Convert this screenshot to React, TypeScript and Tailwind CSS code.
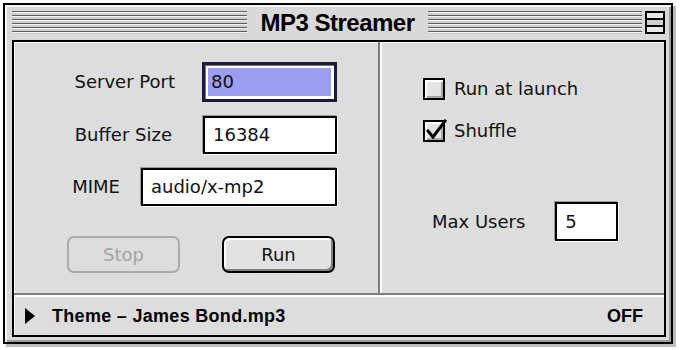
import { useState } from 'react'

const label = "font-['DejaVu_Sans',sans-serif] text-[18px] leading-none text-[#111]"
const stripes =
  'h-[23px] bg-[repeating-linear-gradient(to_bottom,#5e5e5e_0px,#5e5e5e_1px,#f4f4f4_1px,#f4f4f4_2px,#cfcfcf_2px,#cfcfcf_4px)]'

function Field({ value, width, focused = false }: { value: string; width: string; focused?: boolean }) {
  if (focused) {
    return (
      <div className={`${width} h-[40px] border-[3px] border-[#1c1c3a] bg-white p-[3px] shadow-[inset_1px_1px_0_#777]`}>
        <div className="flex h-full items-center bg-[#9d9df2] pl-[3px]">
          <span className={label}>{value}</span>
        </div>
      </div>
    )
  }
  return (
    <div
      className={`${width} flex items-center border-2 border-black bg-white pl-[8px] shadow-[1px_1px_0_#ffffff,-1px_-1px_0_#9a9a9a]`}
    >
      <span className={label}>{value}</span>
    </div>
  )
}

function Checkbox({ text, checked }: { text: string; checked: boolean }) {
  return (
    <div className="flex items-center gap-[9px]">
      <div className="relative h-[22px] w-[22px] border-2 border-black bg-[#e4e4e4] shadow-[inset_2px_2px_0_#ffffff,inset_-2px_-2px_0_#a8a8a8]">
        {checked && (
          <svg className="absolute -left-[2px] -top-[4px]" width="26" height="26" viewBox="0 0 26 26">
            <path d="M5 13 L10 19 L22 3" fill="none" stroke="#000" strokeWidth="3" strokeLinecap="square" />
          </svg>
        )}
      </div>
      <span className={label}>{text}</span>
    </div>
  )
}

export default function App() {
  const [shuffle] = useState(true)

  return (
    <div className="h-[350px] w-[680px] bg-white pl-[3px] pt-[3px]">
      <div className="flex h-[341px] w-[670px] flex-col border-2 border-black bg-[#d9d9d9] shadow-[inset_2px_2px_0_#f6f6f6,inset_-2px_-2px_0_#9c9c9c,3px_3px_0_#bdbdbd]">
        {/* title bar */}
        <div className="flex h-[35px] shrink-0 items-center pl-[7px] pr-[4px]">
          <div className={`w-[235px] ${stripes}`} />
          <div className="flex w-[181px] justify-center">
            <span className="font-['Liberation_Sans',sans-serif] text-[24px] font-bold leading-none tracking-[-0.5px] text-black">
              MP3 Streamer
            </span>
          </div>
          <div className={`flex-1 ${stripes}`} />
          <div className="ml-[3px] mr-[2px] flex h-[23px] w-[20px] flex-col border-2 border-black bg-[#d0d0d0]">
            <div className="flex-1 bg-[#e8e8e8]" />
            <div className="h-[2px] bg-black" />
            <div className="flex-1 bg-[#cfcfcf]" />
            <div className="h-[2px] bg-black" />
            <div className="flex-1 bg-[#e8e8e8]" />
          </div>
        </div>

        {/* content frame */}
        <div className="mb-[5px] ml-[7px] flex h-[297px] w-[654px] flex-col border-2 border-black bg-[#dddddd] shadow-[inset_1px_1px_0_#ffffff]">
          <div className="flex h-[251px]">
            {/* left pane */}
            <div className="flex w-[364px] flex-col pr-[41px] pt-[20px]">
              <div className="flex items-center justify-end gap-[27px]">
                <span className={label}>Server Port</span>
                <Field value="80" width="w-[135px]" focused />
              </div>
              <div className="mt-[14px] flex items-center justify-end gap-[31px]">
                <span className={label}>Buffer Size</span>
                <Field value="16384" width="w-[134px] h-[38px]" />
              </div>
              <div className="mt-[14px] flex items-center justify-end gap-[21px]">
                <span className={label}>MIME</span>
                <Field value="audio/x-mp2" width="w-[196px] h-[38px]" />
              </div>
              <div className="mt-[30px] flex gap-[42px] pl-[53px]">
                <button
                  type="button"
                  disabled
                  className={`flex h-[37px] w-[113px] items-center justify-center rounded-[7px] border-2 border-[#aaaaaa] bg-[#dddddd] ${label} text-[#a4a4a4]`}
                >
                  Stop
                </button>
                <button
                  type="button"
                  className={`flex h-[37px] w-[113px] items-center justify-center rounded-[7px] border-2 border-black bg-[#e2e2e2] shadow-[inset_2px_2px_0_#ffffff,inset_-2px_-2px_0_#808080] ${label}`}
                >
                  Run
                </button>
              </div>
            </div>

            {/* groove */}
            <div className="flex w-[4px]">
              <div className="w-[2px] bg-[#7c7c7c]" />
              <div className="w-[2px] bg-white" />
            </div>

            {/* right pane */}
            <div className="flex flex-1 flex-col pl-[41px] pt-[36px]">
              <Checkbox text="Run at launch" checked={false} />
              <div className="mt-[20px]">
                <Checkbox text="Shuffle" checked={shuffle} />
              </div>
              <div className="mt-[60px] flex items-center gap-[30px] pl-[9px]">
                <span className={label}>Max Users</span>
                <Field value="5" width="w-[63px] h-[39px]" />
              </div>
            </div>
          </div>

          {/* groove */}
          <div className="flex h-[4px] flex-col">
            <div className="h-[2px] bg-[#7c7c7c]" />
            <div className="h-[2px] bg-white" />
          </div>

          {/* status bar */}
          <div className="flex flex-1 items-center pl-[11px] pr-[21px]">
            <svg width="10" height="16" viewBox="0 0 10 16">
              <path d="M0 0 L10 8 L0 16 Z" fill="#000" />
            </svg>
            <span className="ml-[17px] font-['Liberation_Sans',sans-serif] text-[18px] font-bold leading-none tracking-[0.3px] text-black">
              Theme – James Bond.mp3
            </span>
            <span className="ml-auto font-['Liberation_Sans',sans-serif] text-[18px] font-bold leading-none text-black">
              OFF
            </span>
          </div>
        </div>
      </div>
    </div>
  )
}
